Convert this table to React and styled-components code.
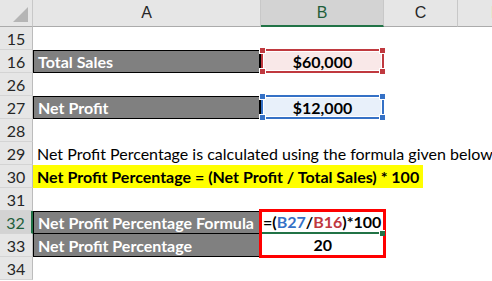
import React from "react";
import styled, { createGlobalStyle, css } from "styled-components";

const GlobalStyle = createGlobalStyle`
  html, body {
    margin: 0;
    padding: 0;
    background: #ffffff;
  }
  body {
    font-family: Lato, "Open Sans", sans-serif;
  }
`;

const Sheet = styled.div`
  position: relative;
  width: 492px;
  height: 281px;
  overflow: hidden;
  display: grid;
  grid-template-columns: 33px 228px 123px 74px 74px;
  grid-template-rows: 27px repeat(11, 23px);
  background: #ffffff;
  font-size: 16px;
  color: #000000;
`;

const Corner = styled.div`
  position: relative;
  background: #e6e6e6;
  border-right: 1px solid #c8c8c8;
  border-bottom: 1px solid #ababab;
  box-sizing: border-box;

  &::after {
    content: "";
    position: absolute;
    right: 4px;
    bottom: 4px;
    width: 0;
    height: 0;
    border-left: 15px solid transparent;
    border-bottom: 15px solid #b5b5b5;
  }
`;

const ColHeader = styled.div`
  display: flex;
  align-items: center;
  box-sizing: border-box;
  background: ${({ $active }) => ($active ? "#d3d3d3" : "#e6e6e6")};
  border-right: 1px solid #c8c8c8;
  border-bottom: ${({ $active }) =>
    $active ? "2px solid #217346" : "1px solid #ababab"};
  color: ${({ $active }) => ($active ? "#1e5e3a" : "#262626")};
  font-family: "Liberation Sans", Arial, sans-serif;
  font-size: 16px;
  padding-top: ${({ $active }) => ($active ? "1px" : "0")};
  padding-left: ${({ $shift }) => $shift || 0}px;
  justify-content: ${({ $start }) => ($start ? "flex-start" : "center")};
`;

const RowNum = styled.div`
  display: flex;
  align-items: center;
  justify-content: center;
  box-sizing: border-box;
  background: ${({ $active }) => ($active ? "#d3d3d3" : "#e6e6e6")};
  border-bottom: 1px solid #d4d4d4;
  border-right: ${({ $active }) =>
    $active ? "2px solid #217346" : "1px solid #bcbcbc"};
  color: ${({ $active }) => ($active ? "#1e5e3a" : "#262626")};
  font-size: 16px;
  padding-top: 1px;
`;

const Cell = styled.div`
  display: flex;
  align-items: center;
  box-sizing: border-box;
  white-space: nowrap;
  overflow: visible;
  min-width: 0;
  padding: 0 4px;
  font-weight: ${({ $bold }) => ($bold ? 700 : 400)};
  justify-content: ${({ $center }) => ($center ? "center" : "flex-start")};

  ${({ $dark }) =>
    $dark &&
    css`
      background: #808080;
      color: #ffffff;
      border: 1px solid #000000;
      border-right-width: 2px;
    `}
  ${({ $topless }) =>
    $topless &&
    css`
      border-top: none;
    `}
`;

const Highlight = styled.span`
  display: flex;
  align-items: center;
  height: 100%;
  padding: 0 4px;
  margin-left: -4px;
  background: #ffff00;
  font-weight: 700;
  position: relative;
  z-index: 1;
`;

const RefCell = styled.div`
  position: relative;
  display: flex;
  align-items: center;
  justify-content: center;
  box-sizing: border-box;
  font-weight: 700;
  background: ${({ $fill }) => $fill};
  border: 2px solid ${({ $line }) => $line};
  box-shadow: inset 0 0 0 1px #ffffff;
  margin: -1px 0 0 0;
  height: 24px;
`;

const Handle = styled.span`
  position: absolute;
  width: 5px;
  height: 5px;
  background: ${({ $line }) => $line};
  border: 1px solid #ffffff;
  ${({ $pos }) => $pos}
`;

const FormulaBox = styled.div`
  grid-column: 3;
  grid-row: 10 / span 2;
  margin: -2px -2px -1px -2px;
  border: 3px solid #ff0000;
  display: grid;
  grid-template-rows: 1fr 1fr;
  background: #ffffff;
  z-index: 2;
`;

const FormulaCell = styled.div`
  position: relative;
  display: flex;
  align-items: center;
  padding: 0 1px;
  font-weight: 700;
  white-space: nowrap;
  border-bottom: 2px solid #217346;
  margin-right: 1px;

  &::after {
    content: "";
    position: absolute;
    right: -3px;
    bottom: -4px;
    width: 5px;
    height: 5px;
    background: #217346;
    border-left: 1px solid #ffffff;
    border-top: 1px solid #ffffff;
  }
`;

const ResultCell = styled.div`
  display: flex;
  align-items: center;
  justify-content: center;
  font-weight: 700;
`;

const Ref = styled.span`
  color: ${({ $color }) => $color};
`;

const RED = "#c0393f";
const BLUE = "#3571c6";

const corners = [
  "left: -4px; top: -4px;",
  "right: -4px; top: -4px;",
  "left: -4px; bottom: -4px;",
  "right: -4px; bottom: -4px;",
];

const Reference = ({ line, fill, children }) => (
  <RefCell $line={line} $fill={fill}>
    {children}
    {corners.map((p) => (
      <Handle key={p} $line={line} $pos={p} />
    ))}
  </RefCell>
);

const rows = [15, 16, 26, 27, 28, 29, 30, 31, 32, 33, 34];

const renderRow = (n) => {
  switch (n) {
    case 16:
      return [
        <Cell key="a" $dark $bold>
          Total Sales
        </Cell>,
        <Reference key="b" line={RED} fill="#f9e8e8">
          $60,000
        </Reference>,
      ];
    case 27:
      return [
        <Cell key="a" $dark $bold>
          Net Profit
        </Cell>,
        <Reference key="b" line={BLUE} fill="#e8f0fa">
          $12,000
        </Reference>,
      ];
    case 29:
      return [
        <Cell key="a">
          Net Profit Percentage is calculated using the formula given below
        </Cell>,
        <Cell key="b" />,
      ];
    case 30:
      return [
        <Cell key="a">
          <Highlight>
            Net Profit Percentage = (Net Profit / Total Sales) * 100
          </Highlight>
        </Cell>,
        <Cell key="b" />,
      ];
    // column B of rows 32 and 33 is the FormulaBox below
    case 32:
      return [
        <Cell key="a" $dark $bold>
          Net Profit Percentage Formula
        </Cell>,
      ];
    case 33:
      return [
        <Cell key="a" $dark $bold $topless>
          Net Profit Percentage
        </Cell>,
      ];
    default:
      return [<Cell key="a" />, <Cell key="b" />];
  }
};

export default function App() {
  return (
    <>
      <GlobalStyle />
      <Sheet>
        <Corner />
        <ColHeader>A</ColHeader>
        <ColHeader $active>B</ColHeader>
        <ColHeader>C</ColHeader>
        <ColHeader $start $shift={33}>
          D
        </ColHeader>
        {rows.map((n) => (
          <React.Fragment key={n}>
            <RowNum $active={n === 32}>{n}</RowNum>
            {renderRow(n)}
            <Cell />
            <Cell />
          </React.Fragment>
        ))}
        <FormulaBox>
          <FormulaCell>
            =(<Ref $color={BLUE}>B27</Ref>/<Ref $color={RED}>B16</Ref>)*100
          </FormulaCell>
          <ResultCell>20</ResultCell>
        </FormulaBox>
      </Sheet>
    </>
  );
}
